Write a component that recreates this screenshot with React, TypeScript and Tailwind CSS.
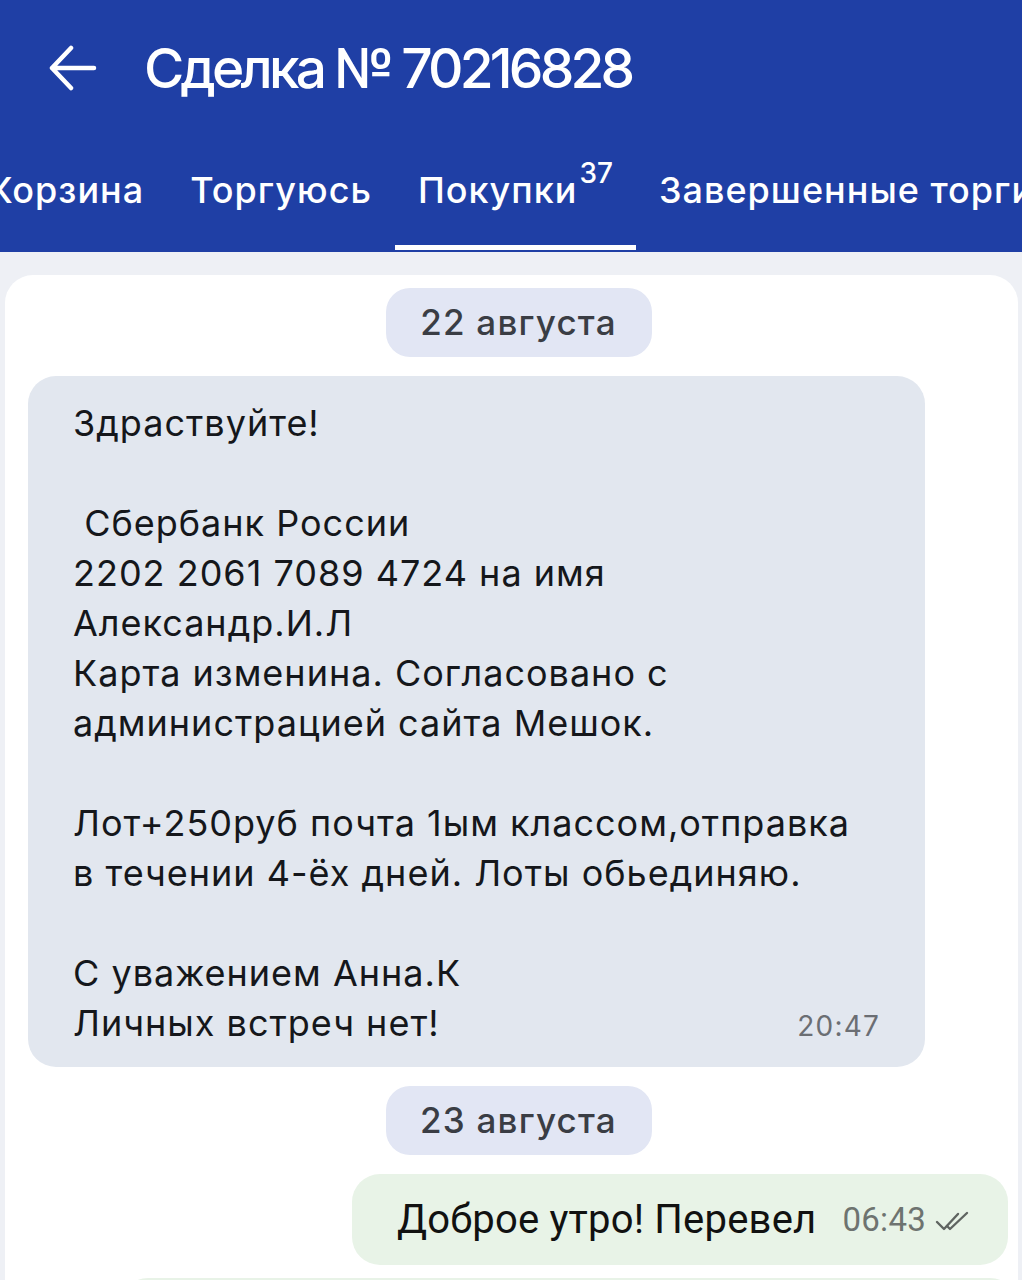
import React from "react";

const SANS = "font-['Inter','Roboto','Noto_Sans',sans-serif]";

const lines = [
  "Здраствуйте!",
  "",
  " Сбербанк России",
  "2202 2061 7089 4724 на имя",
  "Александр.И.Л",
  "Карта изменина. Согласовано с",
  "администрацией сайта Мешок.",
  "",
  "Лот+250руб почта 1ым классом,отправка",
  "в течении 4-ёх дней. Лоты обьединяю.",
  "",
  "С уважением Анна.К",
];

function DateChip({ label }: { label: string }) {
  return (
    <div className="flex justify-center pl-[14px]">
      <div className="h-[69px] w-[266px] rounded-[24px] bg-[#e2e6f4] flex items-center justify-center text-[35px] tracking-[1.2px] text-[#3a3d44] font-medium">
        {label}
      </div>
    </div>
  );
}

function DoubleCheck() {
  return (
    <svg width="36" height="24" viewBox="0 0 36 24" fill="none" stroke="#5f6461" strokeWidth="2.4" strokeLinecap="round" strokeLinejoin="round">
      <path d="M2 12 L9 19 L23 4" />
      <path d="M12 16 L15 19 L32 3" />
    </svg>
  );
}

export default function App() {
  return (
    <div className={`w-[1022px] h-[1280px] overflow-hidden bg-white ${SANS}`}>
      {/* Header */}
      <div className="bg-[#1f3fa5] h-[252px] flex flex-col text-white overflow-hidden">
        <div className="h-[136px] flex items-center pl-[48px]">
          <svg width="50" height="46" viewBox="0 0 50 46" fill="none" stroke="white" strokeWidth="4.5" strokeLinecap="round" strokeLinejoin="round">
            <path d="M46 23 H4 M23 3 L4 23 L23 43" />
          </svg>
          <h1 className="ml-[46px] text-[55px] font-medium tracking-[-3.8px] leading-none">
            Сделка № 70216828
          </h1>
        </div>
        <div className="flex whitespace-nowrap ml-[-35px] text-[36px] font-medium tracking-[1px]">
          {["Корзина", "Торгуюсь"].map((t) => (
            <div key={t} className="px-[23px] pt-[27px] h-[116px] shrink-0">
              {t}
            </div>
          ))}
          <div className="px-[23px] pt-[27px] h-[116px] flex flex-col shrink-0">
            <div className="flex">
              <span>Покупки</span>
              <span className="text-[28px] tracking-[0px] -mt-[11px] ml-[2px]">37</span>
            </div>
            <div className="mt-auto mb-[2px] -mx-[23px] h-[5px] bg-white" />
          </div>
          <div className="px-[23px] pt-[27px] h-[116px] shrink-0">Завершенные торги</div>
        </div>
      </div>

      {/* Chat area */}
      <div className="bg-[#eef0f5] pt-[23px]">
        <div className="ml-[5px] mr-[4px] bg-white rounded-t-[28px] pt-[13px] h-[1010px]">
          <DateChip label="22 августа" />

          <div className="mt-[19px] ml-[23px] w-[897px] rounded-[28px] bg-[#e2e7ef] pl-[45px] pr-[45px] pt-[22px] pb-[16px] text-[36px] tracking-[1px] leading-[50px] text-[#15171b]">
            {lines.map((l, i) => (
              <div key={i} className="whitespace-pre h-[50px]">
                {l}
              </div>
            ))}
            <div className="flex items-baseline justify-between">
              <span>Личных встреч нет!</span>
              <span className="text-[28px] tracking-[1.2px] text-[#6b6e73]">20:47</span>
            </div>
          </div>

          <div className="mt-[19px]">
            <DateChip label="23 августа" />
          </div>

          <div className="mt-[19px] flex justify-end pr-[10px]">
            <div className="h-[91px] w-[656px] rounded-[28px] bg-[#e8f3e7] flex items-center pl-[45px] font-['Roboto',sans-serif]">
              <span className="text-[40px] tracking-[0.2px] text-[#111]">Доброе утро! Перевел</span>
              <span className="ml-[26px] text-[33px] tracking-[0.3px] text-[#6e7370]">06:43</span>
              <span className="ml-[9px] mt-[4px]">
                <DoubleCheck />
              </span>
            </div>
          </div>

          <div className="mt-[13px] ml-[115px] h-[40px] rounded-t-[28px] bg-[#e8f3e7]" />
        </div>
      </div>
    </div>
  );
}
